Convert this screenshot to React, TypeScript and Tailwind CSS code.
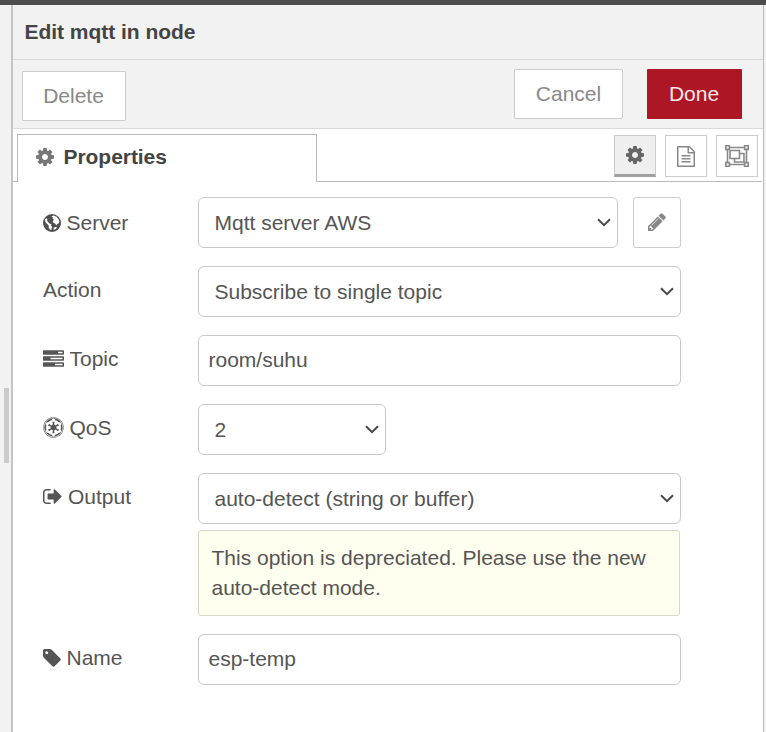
import React from "react";
import { FaEmpire } from "react-icons/fa";

const PATHS = {
  cog: "M1152 896q0-106-75-181t-181-75-181 75-75 181 75 181 181 75 181-75 75-181zm512-109v222q0 12-8 23t-20 13l-185 28q-19 54-39 91 35 50 107 138 10 12 10 25t-9 23q-27 37-99 108t-94 71q-12 0-26-9l-138-108q-44 23-91 38-16 136-29 186-7 28-36 28h-222q-14 0-24.5-8.5t-11.5-21.5l-28-184q-49-16-90-37l-141 107q-10 9-25 9-14 0-25-11-126-114-165-168-7-10-7-23 0-12 8-23 15-21 51-66.5t54-70.5q-27-50-41-99l-183-27q-13-2-21-12.5t-8-23.5v-222q0-12 8-23t19-13l186-28q14-46 39-92-40-57-107-138-10-12-10-24 0-10 9-23 26-36 98.5-107.5t94.5-71.5q13 0 26 10l138 107q44-23 91-38 16-136 29-186 7-28 36-28h222q14 0 24.5 8.5t11.5 21.5l28 184q49 16 90 37l142-107q9-9 24-9 13 0 25 10 129 119 165 170 7 8 7 22 0 12-8 23-15 21-51 66.5t-54 70.5q26 50 41 98l183 28q13 2 21 12.5t8 23.5z",
  pencil: "M491 1536l91-91-235-235-91 91v107h128v128h107zm523-928q0-22-22-22-10 0-17 7l-542 542q-7 7-7 17 0 22 22 22 10 0 17-7l542-542q7-7 7-17zm-54-192l416 416-832 832h-416v-416zm683 96q0 53-37 90l-166 166-416-416 166-165q36-38 90-38 53 0 91 38l235 234q37 39 37 91z",
  tag: "M576 448q0-53-37.5-90.5t-90.5-37.5-90.5 37.5-37.5 90.5 37.5 90.5 90.5 37.5 90.5-37.5 37.5-90.5zm1067 576q0 53-37 90l-491 492q-39 37-91 37-53 0-90-37l-715-716q-38-37-64.5-101t-26.5-117v-416q0-52 38-90t90-38h416q53 0 117 26.5t102 64.5l715 714q37 39 37 91z",
  tasks: "M1024 1408h640v-128h-640v128zm-384-512h1024v-128h-1024v128zm640-512h384v-128h-384v128zm512 832v256q0 26-19 45t-45 19h-1664q-26 0-45-19t-19-45v-256q0-26 19-45t45-19h1664q26 0 45 19t19 45zm0-512v256q0 26-19 45t-45 19h-1664q-26 0-45-19t-19-45v-256q0-26 19-45t45-19h1664q26 0 45 19t19 45zm0-512v256q0 26-19 45t-45 19h-1664q-26 0-45-19t-19-45v-256q0-26 19-45t45-19h1664q26 0 45 19t19 45z",
  signOut: "M704 1440q0 4 1 20t.5 26.5-3 23.5-10 19.5-20.5 6.5h-320q-119 0-203.5-84.5t-84.5-203.5v-704q0-119 84.5-203.5t203.5-84.5h320q13 0 22.5 9.5t9.5 22.5q0 4 1 20t.5 26.5-3 23.5-10 19.5-20.5 6.5h-320q-66 0-113 47t-47 113v704q0 66 47 113t113 47h312l11.5 1 11.5 3 8 5.5 7 9 2 13.5zm928-544q0 26-19 45l-544 544q-19 19-45 19t-45-19-19-45v-288h-448q-26 0-45-19t-19-45v-384q0-26 19-45t45-19h448v-288q0-26 19-45t45-19 45 19l544 544q19 19 19 45z",
  fileText: "M1596 380q28 28 48 76t20 88v1152q0 40-28 68t-68 28h-1344q-40 0-68-28t-28-68v-1600q0-40 28-68t68-28h896q40 0 88 20t76 48zm-444-244v376h376q-10-29-22-41l-313-313q-12-12-41-22zm384 1528v-1024h-416q-40 0-68-28t-28-68v-416h-768v1536h1280zm-1024-864q0-14 9-23t23-9h704q14 0 23 9t9 23v64q0 14-9 23t-23 9h-704q-14 0-23-9t-9-23v-64zm736 224q14 0 23 9t9 23v64q0 14-9 23t-23 9h-704q-14 0-23-9t-9-23v-64q0-14 9-23t23-9h704zm0 256q14 0 23 9t9 23v64q0 14-9 23t-23 9h-704q-14 0-23-9t-9-23v-64q0-14 9-23t23-9h704z",
};

function Icon({ d, box, className }: { d: string; box: string; className: string }) {
  return (
    <svg viewBox={box} className={`shrink-0 ${className}`} fill="currentColor">
      <path d={d} />
    </svg>
  );
}

function Globe() {
  return (
    <svg viewBox="0 0 18 18" className="h-[18px] w-[18px] shrink-0">
      <circle cx="9" cy="9" r="9" fill="#505050" />
      <path d="M2 5.6L3.2 4.2L4.4 5L4 6.6L5.2 8.2L6.6 9.4L8.4 10.4L8 11.6L9.2 13L8.4 14.4L8.8 16L7 15.6L5.6 13.4L5.8 11.4L3.6 9.6L2.2 7.6Z" fill="#fff" />
      <path d="M8.4 2.2L10.4 1.6L13.2 2.6L15.4 4.8L16.4 7.4L15.8 9.4L14.4 9.8L13.2 11.4L12.2 9.4L10.4 9L9.8 7.2L11 5.6L9.6 4.8L10 3.4Z" fill="#fff" />
      <path d="M10.6 13.8L12.6 13L14.2 13.4L12.4 15.2L10.6 15.8Z" fill="#fff" />
    </svg>
  );
}

function ObjectGroup() {
  return (
    <svg viewBox="0 0 24 22" className="h-[22px] w-[24px]" fill="none" stroke="currentColor" strokeWidth="1.6">
      <path d="M4.5 2.5H19.5M4.5 19.5H19.5M2.5 4.5V17.5M21.5 4.5V17.5" />
      <path d="M.8 .8h3.6v3.6H.8zM19.6 .8h3.6v3.6h-3.6zM.8 17.6h3.6v3.6H.8zM19.6 17.6h3.6v3.6h-3.6z" />
      <path d="M5 5.5h9.5v8H5zM14.5 8.5H19v8.5H9.5v-3.5" />
    </svg>
  );
}

function Chevron() {
  return (
    <svg viewBox="0 0 14 9" className="h-[9px] w-[14px] shrink-0" fill="none" stroke="#484848" strokeWidth="2">
      <path d="M1 1.2L7 7.2L13 1.2" />
    </svg>
  );
}

function Row({ icon, label, shift, children }: { icon?: React.ReactNode; label: string; shift: string; children: React.ReactNode }) {
  return (
    <div className="flex">
      <div className={`flex h-[51px] w-[155px] shrink-0 items-center ${shift}`}>
        {icon}
        <span>{label}</span>
      </div>
      {children}
    </div>
  );
}

function Select({ value, width }: { value: string; width: string }) {
  return (
    <div className={`flex h-[51px] items-center justify-between rounded-[6px] border border-[#c8c8c8] bg-white pr-[6px] pl-[15.5px] ${width}`}>
      <span>{value}</span>
      <Chevron />
    </div>
  );
}

function Input({ value }: { value: string }) {
  return (
    <div className="flex h-[51px] w-[483px] items-center rounded-[6px] border border-[#c8c8c8] bg-white px-[9.5px] pb-[2px]">
      {value}
    </div>
  );
}

export default function App() {
  return (
    <div className="flex h-[732px] w-[766px] flex-col overflow-hidden bg-[#f2f2f2] font-['Liberation_Sans',Arial,sans-serif] text-[21px] leading-[30px] text-[#555]">
      <div className="h-[5px] shrink-0 bg-[#4d4d4d]" />
      <div className="flex flex-1">
        <div className="flex w-[11px] items-start pt-[383px] pl-[4px]">
          <div className="h-[75px] w-[5px] bg-[#cbcbcb]" />
        </div>
        <div className="flex w-[753px] flex-col border-r border-l-2 border-r-[#bbb] border-l-[#c4c4c4] bg-white">
          <div className="h-[55px] border-b border-[#d8d8d8] bg-[#f2f2f2] pt-[12px] pl-[11.5px] font-bold tracking-[-0.03px] text-[#444]">
            Edit mqtt in node
          </div>
          <div className="flex h-[69px] items-start border-b border-[#d8d8d8] bg-[#f2f2f2] pt-[9px] pr-[21px] pl-[9px] text-[#888]">
            <div className="mt-[2px] flex h-[50px] w-[104px] items-center justify-center rounded-[1px] border border-[#ccc] bg-white pr-px">Delete</div>
            <div className="ml-auto flex h-[50px] w-[109px] items-center justify-center rounded-[1px] border border-[#ccc] bg-white">Cancel</div>
            <div className="ml-[24px] flex h-[50px] w-[95px] items-center justify-center rounded-[1px] bg-[#ad1625] pr-px text-[#f5e6e8]">Done</div>
          </div>
          <div className="flex h-[53px] items-end">
            <div className="h-px w-[4px] bg-[#bbb]" />
            <div className="flex h-[48px] w-[300px] items-center border border-b-0 border-[#bbb] pb-[3px] pl-[18px] font-bold text-[#444]">
              <Icon d={PATHS.cog} box="128 128 1536 1536" className="mr-[9.5px] h-[18px] w-[18px] text-[#777]" />
              <span className="tracking-[-0.05px]">Properties</span>
            </div>
            <div className="mr-px flex h-[48px] flex-1 items-start justify-end gap-[9px] border-b border-[#bbb] pt-px pr-[4px] text-[#888]">
              <div className="flex h-[42px] w-[42px] items-center justify-center border border-b-[3px] border-[#ccc] border-b-[#a0a0a0] bg-[#efefef] text-[#666]">
                <Icon d={PATHS.cog} box="128 128 1536 1536" className="h-[18px] w-[18px]" />
              </div>
              <div className="flex h-[42px] w-[42px] items-center justify-center border border-[#ccc]">
                <Icon d={PATHS.fileText} box="128 0 1536 1792" className="h-[21px] w-[18px]" />
              </div>
              <div className="flex h-[42px] w-[42px] items-center justify-center border border-[#ccc]">
                <ObjectGroup />
              </div>
            </div>
          </div>
          <div className="flex flex-col gap-[18px] pt-[15px] pl-[30px]">
            <Row label="Server" shift="gap-[5.5px]" icon={<Globe />}>
              <Select value="Mqtt server AWS" width="w-[420px]" />
              <div className="ml-[15px] flex h-[51px] w-[48px] items-center justify-center rounded-[3px] border border-[#ccc] pb-px text-[#888]">
                <Icon d={PATHS.pencil} box="128 128 1536 1536" className="h-[18px] w-[18px]" />
              </div>
            </Row>
            <Row label="Action" shift="-mt-[2px]">
              <Select value="Subscribe to single topic" width="w-[483px]" />
            </Row>
            <Row label="Topic" shift="-mt-[2px] gap-[5.5px]" icon={<Icon d={PATHS.tasks} box="0 128 1792 1408" className="h-[17px] w-[21px]" />}>
              <Input value="room/suhu" />
            </Row>
            <Row label="QoS" shift="-mt-[2px] gap-[5.5px]" icon={<FaEmpire className="h-[21px] w-[21px]" />}>
              <Select value="2" width="w-[188px]" />
            </Row>
            <Row label="Output" shift="-mt-[2px] gap-[6px]" icon={<Icon d={PATHS.signOut} box="64 192 1600 1408" className="h-[17px] w-[19px]" />}>
              <div>
                <Select value="auto-detect (string or buffer)" width="w-[483px]" />
                <div className="mt-[6px] h-[86px] w-[482px] rounded-[3px] border border-[#d8d8c8] bg-[#ffffef] pt-[12px] pl-[12.5px]">
                  This option is depreciated. Please use the new<br />auto-detect mode.
                </div>
              </div>
            </Row>
            <Row label="Name" shift="-mt-[2px] gap-[5.5px]" icon={<Icon d={PATHS.tag} box="128 128 1536 1536" className="h-[18px] w-[18px]" />}>
              <Input value="esp-temp" />
            </Row>
          </div>
        </div>
      </div>
    </div>
  );
}
